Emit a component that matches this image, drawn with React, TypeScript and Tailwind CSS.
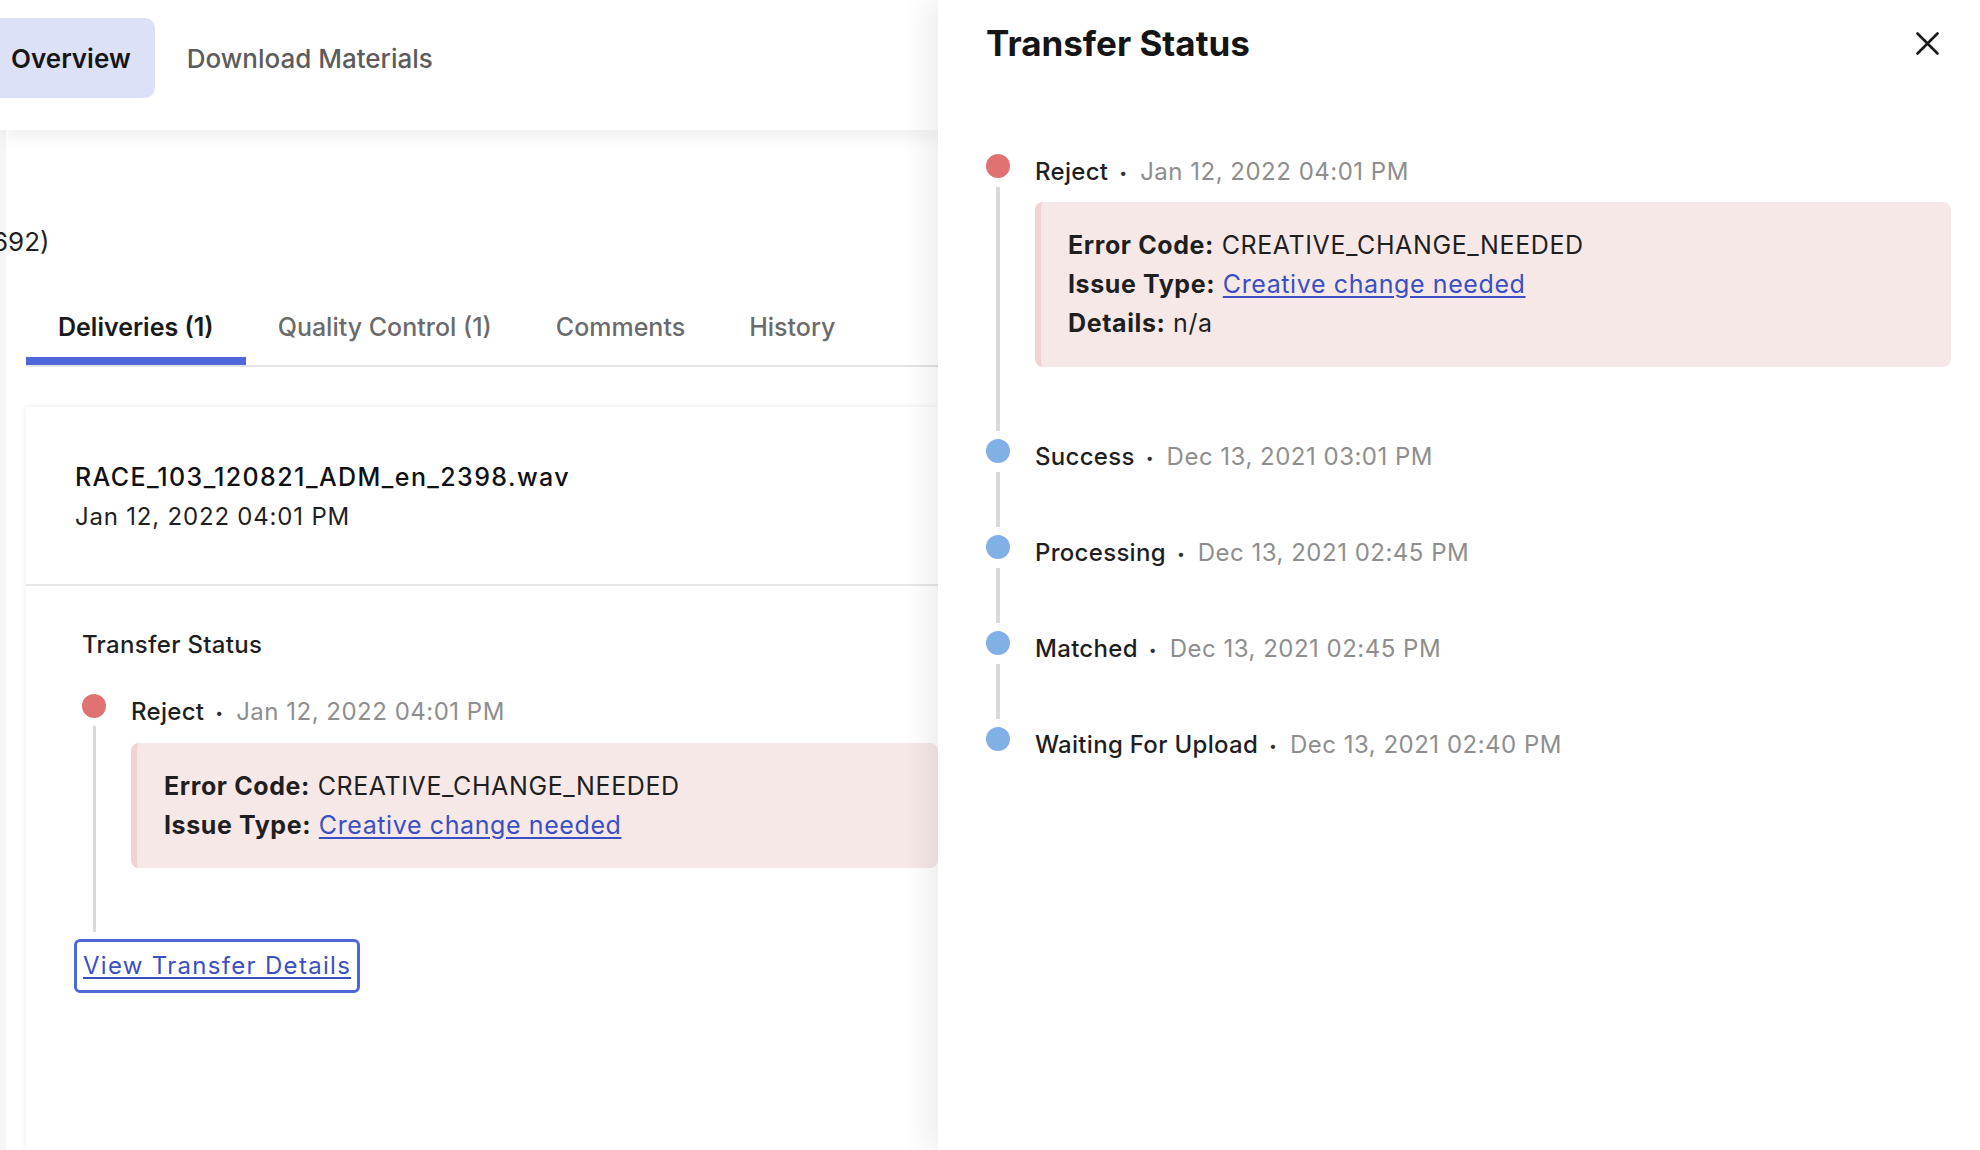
// Delivery overview with transfer status side drawer
import React from "react"

type Step = {
  label: string
  date: string
  tone: "red" | "blue"
  error?: { code: string; issue: string; details?: string }
}

const steps: Step[] = [
  {
    label: "Reject",
    date: "Jan 12, 2022 04:01 PM",
    tone: "red",
    error: { code: "CREATIVE_CHANGE_NEEDED", issue: "Creative change needed", details: "n/a" },
  },
  { label: "Success", date: "Dec 13, 2021 03:01 PM", tone: "blue" },
  { label: "Processing", date: "Dec 13, 2021 02:45 PM", tone: "blue" },
  { label: "Matched", date: "Dec 13, 2021 02:45 PM", tone: "blue" },
  { label: "Waiting For Upload", date: "Dec 13, 2021 02:40 PM", tone: "blue" },
]

const StepHeader = ({ step }: { step: Step }) => (
  <div className="h-[36px] flex items-center whitespace-nowrap">
    <span className="font-medium text-[#1f1f1f] tracking-[0.3px]">{step.label}</span>
    <span className="ml-[11px] mr-[13px] text-[14px] text-[#333]">•</span>
    <span className="text-[#8e8e8e] tracking-[0.5px]">{step.date}</span>
  </div>
)

const ErrorBox = ({ error, className }: { error: NonNullable<Step["error"]>; className?: string }) => (
  <div
    className={`rounded-lg bg-[#f7e8e8] border-l-[6px] border-[#f0d2d2] py-6 pl-[27px] text-[25px] tracking-[0.6px] leading-[39px] whitespace-nowrap ${className ?? ""}`}
  >
    <div>
      <span className="font-bold">Error Code:</span> {error.code}
    </div>
    <div>
      <span className="font-bold">Issue Type:</span>{" "}
      <a href="#" className="text-[#3b4fc2] underline underline-offset-[3px]">
        {error.issue}
      </a>
    </div>
    {error.details && (
      <div>
        <span className="font-bold">Details:</span> {error.details}
      </div>
    )}
  </div>
)

const Dot = ({ tone }: { tone: Step["tone"] }) => (
  <div className={`w-[24px] h-[24px] rounded-full shrink-0 ${tone === "red" ? "bg-[#e07272]" : "bg-[#80b0e6]"}`} />
)

const App: React.FC = () => {
  const tabs = ["Deliveries (1)", "Quality Control (1)", "Comments", "History"]

  return (
    <div
      className="w-[1980px] h-[1150px] overflow-hidden flex bg-white text-[24px] text-[#1f1f1f]"
      style={{ fontFamily: "Inter, 'Noto Sans', 'Liberation Sans', sans-serif" }}
    >
      {/* Main page */}
      <main className="w-[938px] shrink-0 overflow-hidden flex flex-col">
        <header className="h-[130px] shrink-0 flex items-start pt-[18px] bg-white shadow-[0_6px_18px_rgba(0,0,0,0.07)] relative z-10">
          <div className="-ml-[13px] h-[80px] px-6 flex items-center rounded-r-[10px] bg-[#dde1f7] text-[26px] font-semibold text-[#161616]">
            Overview
          </div>
          <div className="ml-2 h-[80px] px-6 flex items-center text-[26px] font-medium text-[#5c5c5c]">
            Download Materials
          </div>
        </header>

        <div className="flex-1 flex flex-col border-l-[6px] border-[#f6f6f6]">
          <div className="mt-[94px] -ml-[14px] text-[26px] leading-[36px] whitespace-nowrap">692)</div>

          <nav className="mt-[51px] ml-[20px] flex border-b-2 border-[#e4e4e4] text-[25px]">
            {tabs.map((tab, i) => (
              <div
                key={tab}
                className={`px-8 pb-[14px] leading-[32px] border-b-[8px] whitespace-nowrap ${
                  i === 0 ? "border-[#4f68d9] font-semibold text-[#1a1a1a]" : "border-transparent font-medium text-[#6b6b6b]"
                }`}
              >
                {tab}
              </div>
            ))}
          </nav>

          <section className="mt-[40px] ml-[20px] flex-1 bg-white shadow-[0_0_6px_rgba(0,0,0,0.08)]">
            <div className="pt-[51px] pb-[48px] pl-[49px] leading-[39px] border-b-2 border-[#e8e8e8] whitespace-nowrap">
              <div className="text-[25px] font-medium tracking-[1.4px] text-[#111]">RACE_103_120821_ADM_en_2398.wav</div>
              <div className="tracking-[0.8px]">Jan 12, 2022 04:01 PM</div>
            </div>

            <div className="pt-[41px] pl-[56px] whitespace-nowrap">
              <div className="font-medium tracking-[0.3px] leading-[36px]">Transfer Status</div>
              <div className="mt-[31px] flex">
                <div className="w-[24px] flex flex-col items-center">
                  <Dot tone="red" />
                  <div className="w-[3px] flex-1 mt-[8px] bg-[#dadada]" />
                </div>
                <div className="ml-[25px] flex-1 pb-[64px]">
                  <StepHeader step={steps[0]} />
                  <ErrorBox error={{ ...steps[0].error!, details: undefined }} className="mt-[13px] pb-[23px]" />
                </div>
              </div>
              <button className="mt-[7px] -ml-[8px] h-[54px] px-[6px] border-[3px] border-[#4f68d9] rounded-md text-[#3b4fc2] tracking-[1.3px] underline underline-offset-[3px]">
                View Transfer Details
              </button>
            </div>
          </section>
        </div>
      </main>

      {/* Transfer status drawer */}
      <aside className="flex-1 relative z-20 bg-white shadow-[-10px_0_28px_rgba(0,0,0,0.08)] pl-[48px] pr-[29px]">
        <div className="pt-[23px] pr-[12px] flex items-start justify-between">
          <h2 className="text-[35px] leading-[40px] font-bold text-[#151515]">Transfer Status</h2>
          <button className="mt-[8px] w-[24px] h-[24px] flex items-center justify-center" aria-label="Close">
            <svg width="23" height="23" viewBox="0 0 23 23" fill="none" stroke="#1a1a1a" strokeWidth="2.6" strokeLinecap="round">
              <path d="M1.5 1.5 L21.5 21.5 M21.5 1.5 L1.5 21.5" />
            </svg>
          </button>
        </div>

        <ol className="mt-[91px]">
          {steps.map((step, i) => {
            const last = i === steps.length - 1
            return (
              <li key={step.label} className="flex">
                <div className="w-[24px] flex flex-col items-center">
                  <Dot tone={step.tone} />
                  {!last && <div className="w-[4px] flex-1 mt-[9px] mb-[8px] bg-[#d9d9d9]" />}
                </div>
                <div className={`ml-[25px] flex-1 ${last ? "" : step.error ? "pb-[72px]" : "pb-[60px]"}`}>
                  <StepHeader step={step} />
                  {step.error && <ErrorBox error={step.error} className="mt-[12px]" />}
                </div>
              </li>
            )
          })}
        </ol>
      </aside>
    </div>
  )
}

export default App
